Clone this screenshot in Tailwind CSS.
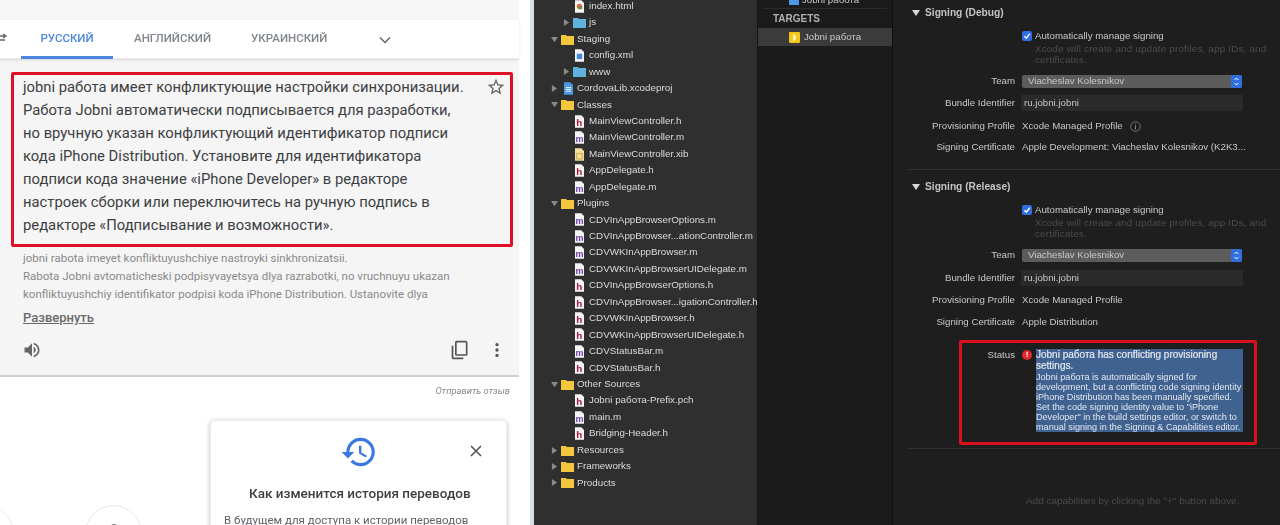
<!DOCTYPE html>
<html lang="ru">
<head>
    <meta charset="UTF-8">
    <title>Jobni работа</title>
    <script src="https://cdn.jsdelivr.net/npm/@tailwindcss/browser@4"></script>
</head>
<body class="bg-white">
    <svg class="hidden">
        <symbol id="fh" viewBox="0 0 10 14"><path d="M0 0h7l3 3v11H0z" fill="#f4f4f4"/><text x="1.5" y="12" font-size="11" font-weight="700" font-family="Liberation Sans" fill="#a3193a">h</text></symbol>
        <symbol id="fm" viewBox="0 0 10 14"><path d="M0 0h7l3 3v11H0z" fill="#f4f4f4"/><text x="0.6" y="12" font-size="10" font-weight="700" font-family="Liberation Sans" fill="#6b3fa8">m</text></symbol>
        <symbol id="fx" viewBox="0 0 10 14"><path d="M0 0h7l3 3v11H0z" fill="#f3dfa0"/><rect x="2" y="6" width="6" height="6" fill="none" stroke="#c9a03c"/></symbol>
        <symbol id="fw" viewBox="0 0 10 14"><path d="M0 0h7l3 3v11H0z" fill="#f4f4f4"/><rect x="2" y="5" width="6" height="6" fill="#3d8fdc"/></symbol>
        <symbol id="fc" viewBox="0 0 10 14"><path d="M0 0h7l3 3v11H0z" fill="#f4f4f4"/><circle cx="5" cy="7" r="3" fill="#d86a3c"/><path d="M5 7h3v3H5z" fill="#4a9a58"/></symbol>
        <symbol id="fp" viewBox="0 0 10 14"><path d="M0 0h7l3 3v11H0z" fill="#4a97e6"/><path d="M2 6h6M2 8h6M2 10h6" stroke="#fff"/></symbol>
        <symbol id="dy" viewBox="0 0 13 11"><path d="M0 1h5l1 1h7v9H0z" fill="#f5c63c"/></symbol>
        <symbol id="db" viewBox="0 0 13 11"><path d="M0 1h5l1 1h7v9H0z" fill="#5eb2dc"/></symbol>
        <symbol id="ar" viewBox="0 0 8 8"><path d="M1 0l6 4-6 4z" fill="#8a8a8a"/></symbol>
        <symbol id="ad" viewBox="0 0 8 8"><path d="M0 1h8L4 7z" fill="#8a8a8a"/></symbol>
        <symbol id="aw" viewBox="0 0 8 8"><path d="M0 1h8L4 7z" fill="#d8d8d8"/></symbol>
        <symbol id="ck" viewBox="0 0 10 10"><rect width="10" height="10" rx="2" fill="#2f6fe0"/><path d="M2.4 5.2l1.9 2 3.4-4.4" fill="none" stroke="#fff" stroke-width="1.4"/></symbol>
        <symbol id="ud" viewBox="0 0 11 13"><rect width="11" height="13" rx="2" fill="#2f6fe0"/><path d="M3.5 5l2-2 2 2M3.5 8l2 2 2-2" fill="none" stroke="#fff"/></symbol>
    </svg>

    <div class="flex h-[525px] w-[1280px] overflow-hidden [font-family:'Liberation_Sans',sans-serif] blur-[0.4px]">
        <!-- translate panel -->
        <div class="w-[530px] shrink-0 flex flex-col [font-family:Roboto,sans-serif]">
            <div class="w-[519px] h-[20px] shrink-0 bg-[#f7f7f7]"></div>
            <div class="w-[519px] h-[39px] shrink-0 flex items-center border-b border-[#ececec] shadow-sm relative">
                <svg class="w-[12px] h-[12px] -ml-[4px] mt-[-2px]" viewBox="0 0 12 12"><path d="M0 4h9M7 2l3 2-3 2M0 8h9" fill="none" stroke="#666" stroke-width="1.4"/></svg>
                <div class="ml-[13px] w-[92px] h-[39px] flex items-center justify-center border-b-[3px] border-[#4d87e0] pt-[3px] text-[11.500px] font-medium text-[#4d87e0]">РУССКИЙ</div>
                <div class="ml-[21px] text-[11.500px] font-medium text-[#80868b]">АНГЛИЙСКИЙ</div>
                <div class="ml-[40px] text-[11.500px] font-medium text-[#80868b]">УКРАИНСКИЙ</div>
                <svg class="ml-[51px] w-[14px] h-[14px] mt-[2px]" viewBox="0 0 14 14"><path d="M2 4.5l5 5 5-5" fill="none" stroke="#666" stroke-width="1.5"/></svg>
            </div>
            <div class="w-[519px] h-[318px] shrink-0 bg-[#f5f5f5] border-b-2 border-[#cfcfcf] pt-[13px] pl-[11px]">
                <div class="w-[502px] h-[175px] border-[3px] border-[#df0f28] pl-[9px] pt-[1px] flex justify-between rounded-[2px]">
                    <p class="text-[14.800px] leading-[23px] text-[#3c4043] whitespace-nowrap">jobni работа имеет конфликтующие настройки синхронизации.<br>Работа Jobni автоматически подписывается для разработки,<br>но вручную указан конфликтующий идентификатор подписи<br>кода iPhone Distribution. Установите для идентификатора<br>подписи кода значение «iPhone Developer» в редакторе<br>настроек сборки или переключитесь на ручную подпись в<br>редакторе «Подписывание и возможности».</p>
                    <svg class="w-[20px] h-[20px] mr-[4px] mt-[1px] shrink-0" viewBox="0 0 24 24" fill="#666"><path d="M22 9.24l-7.19-.62L12 2 9.19 8.63 2 9.24l5.46 4.73L5.82 21 12 17.27 18.18 21l-1.63-7.03L22 9.24zM12 15.4l-3.76 2.27 1-4.28-3.32-2.88 4.38-.38L12 6.1l1.71 4.04 4.38.38-3.32 2.88 1 4.28L12 15.4z"/></svg>
                </div>
                <p class="mt-[2px] ml-[12px] text-[11.500px] leading-[18px] text-[#8a8a8a] whitespace-nowrap">jobni rabota imeyet konfliktuyushchiye nastroyki sinkhronizatsii.<br>Rabota Jobni avtomaticheski podpisyvayetsya dlya razrabotki, no vruchnuyu ukazan<br>konfliktuyushchiy identifikator podpisi koda iPhone Distribution. Ustanovite dlya</p>
                <div class="mt-[6px] ml-[12px] text-[13px] leading-[18px] font-medium text-[#6a6a6a] underline">Развернуть</div>
                <div class="mt-[13px] ml-[12px] w-[484px] flex items-center">
                    <svg class="w-[20px] h-[20px] -ml-[1px]" viewBox="0 0 24 24" fill="#666"><path d="M3 9v6h4l5 5V4L7 9H3zm13.5 3c0-1.77-1.02-3.29-2.5-4.03v8.05c1.48-.73 2.5-2.25 2.5-4.02zM14 3.23v2.06c2.89.86 5 3.54 5 6.71s-2.11 5.85-5 6.71v2.06c4.01-.91 7-4.49 7-8.77s-2.99-7.86-7-8.77z"/></svg>
                    <svg class="w-[20px] h-[20px] ml-auto -scale-y-100" viewBox="0 0 24 24" fill="#555"><path d="M16 1H4c-1.1 0-2 .9-2 2v14h2V3h12V1zm3 4H8c-1.1 0-2 .9-2 2v14c0 1.1.9 2 2 2h11c1.1 0 2-.9 2-2V7c0-1.1-.9-2-2-2zm0 16H8V7h11v14z"/></svg>
                    <svg class="w-[20px] h-[20px] ml-[17px]" viewBox="0 0 24 24" fill="#555"><circle cx="12" cy="5.5" r="2"/><circle cx="12" cy="12" r="2"/><circle cx="12" cy="18.500" r="2"/></svg>
                </div>
            </div>
            <div class="w-[519px] shrink-0 pt-[8px] pr-[9px] text-right text-[9.400px] leading-[12px] italic text-[#8a8a8a]">Отправить отзыв</div>
            <div class="flex w-[519px]">
                <div class="w-[57px] h-[57px] shrink-0 rounded-full border border-[#e6e6e6] -ml-[43px] mt-[108px]"></div>
                <div class="w-[57px] h-[57px] shrink-0 rounded-full border border-[#e6e6e6] ml-[71px] mt-[108px] flex justify-center pt-[18px]"><span class="w-[6px] h-[6px] rounded-full bg-[#777]"></span></div>
                <div class="w-[297px] h-[140px] shrink-0 ml-[68px] mt-[23px] rounded-[5px] bg-white border border-[#eee] shadow-[0_1px_5px_rgba(0,0,0,0.25)] pt-[12px] relative">
                    <svg class="w-[38px] h-[38px] ml-[129px]" viewBox="0 0 24 24" fill="#3b78e0"><path d="M13 3c-4.97 0-9 4.03-9 9H1l3.89 3.89.07.14L9 12H6c0-3.87 3.13-7 7-7s7 3.13 7 7-3.13 7-7 7c-1.93 0-3.68-.79-4.94-2.06l-1.42 1.42C8.27 19.99 10.51 21 13 21c4.97 0 9-4.03 9-9s-4.03-9-9-9zm-1 5v5l4.28 2.54.72-1.21-3.5-2.08V8H12z"/></svg>
                    <svg class="absolute top-[22px] left-[257px] w-[16px] h-[16px]" viewBox="0 0 16 16"><path d="M3 3l10 10M13 3L3 13" stroke="#555" stroke-width="1.6"/></svg>
                    <div class="mt-[12px] ml-[38px] text-[13.500px] leading-[20px] font-medium text-[#3c4043] whitespace-nowrap">Как изменится история переводов</div>
                    <div class="mt-[8px] ml-[13px] text-[11.500px] leading-[18px] text-[#5f6368] whitespace-nowrap">В будущем для доступа к истории переводов</div>
                </div>
            </div>
        </div>
        <div class="w-[4px] shrink-0 bg-[#cfe2ee]"></div>

        <!-- project navigator -->
        <div class="w-[224px] shrink-0 bg-[#2f2f2f] text-[9.800px] text-[#dcdcdc] border-r border-[#141414]">
            <div class="-mt-[2px] [&>div]:h-[16.45px] [&>div]:flex [&>div]:items-center [&>div]:whitespace-nowrap [&_svg]:shrink-0">
                <div class="pl-[41px]"><svg class="w-[9px] h-[13px] mr-[5px]"><use href="#fc"/></svg>index.html</div>
                <div class="pl-[29px]"><svg class="w-[7px] h-[7px] mr-[3px]"><use href="#ar"/></svg><svg class="w-[13px] h-[11px] mr-[3px]"><use href="#db"/></svg>js</div>
                <div class="pl-[17px]"><svg class="w-[7px] h-[7px] mr-[3px]"><use href="#ad"/></svg><svg class="w-[13px] h-[11px] mr-[3px]"><use href="#dy"/></svg>Staging</div>
                <div class="pl-[41px]"><svg class="w-[9px] h-[13px] mr-[5px]"><use href="#fw"/></svg>config.xml</div>
                <div class="pl-[29px]"><svg class="w-[7px] h-[7px] mr-[3px]"><use href="#ar"/></svg><svg class="w-[13px] h-[11px] mr-[3px]"><use href="#db"/></svg>www</div>
                <div class="pl-[17px]"><svg class="w-[7px] h-[7px] mr-[6px]"><use href="#ar"/></svg><svg class="w-[9px] h-[13px] mr-[4px]"><use href="#fp"/></svg>CordovaLib.xcodeproj</div>
                <div class="pl-[17px]"><svg class="w-[7px] h-[7px] mr-[3px]"><use href="#ad"/></svg><svg class="w-[13px] h-[11px] mr-[3px]"><use href="#dy"/></svg>Classes</div>
                <div class="pl-[41px]"><svg class="w-[9px] h-[13px] mr-[5px]"><use href="#fh"/></svg>MainViewController.h</div>
                <div class="pl-[41px]"><svg class="w-[9px] h-[13px] mr-[5px]"><use href="#fm"/></svg>MainViewController.m</div>
                <div class="pl-[41px]"><svg class="w-[9px] h-[13px] mr-[5px]"><use href="#fx"/></svg>MainViewController.xib</div>
                <div class="pl-[41px]"><svg class="w-[9px] h-[13px] mr-[5px]"><use href="#fh"/></svg>AppDelegate.h</div>
                <div class="pl-[41px]"><svg class="w-[9px] h-[13px] mr-[5px]"><use href="#fm"/></svg>AppDelegate.m</div>
                <div class="pl-[17px]"><svg class="w-[7px] h-[7px] mr-[3px]"><use href="#ad"/></svg><svg class="w-[13px] h-[11px] mr-[3px]"><use href="#dy"/></svg>Plugins</div>
                <div class="pl-[41px]"><svg class="w-[9px] h-[13px] mr-[5px]"><use href="#fm"/></svg>CDVInAppBrowserOptions.m</div>
                <div class="pl-[41px]"><svg class="w-[9px] h-[13px] mr-[5px]"><use href="#fm"/></svg>CDVInAppBrowser...ationController.m</div>
                <div class="pl-[41px]"><svg class="w-[9px] h-[13px] mr-[5px]"><use href="#fm"/></svg>CDVWKInAppBrowser.m</div>
                <div class="pl-[41px]"><svg class="w-[9px] h-[13px] mr-[5px]"><use href="#fm"/></svg>CDVWKInAppBrowserUIDelegate.m</div>
                <div class="pl-[41px]"><svg class="w-[9px] h-[13px] mr-[5px]"><use href="#fh"/></svg>CDVInAppBrowserOptions.h</div>
                <div class="pl-[41px]"><svg class="w-[9px] h-[13px] mr-[5px]"><use href="#fh"/></svg>CDVInAppBrowser...igationController.h</div>
                <div class="pl-[41px]"><svg class="w-[9px] h-[13px] mr-[5px]"><use href="#fh"/></svg>CDVWKInAppBrowser.h</div>
                <div class="pl-[41px]"><svg class="w-[9px] h-[13px] mr-[5px]"><use href="#fh"/></svg>CDVWKInAppBrowserUIDelegate.h</div>
                <div class="pl-[41px]"><svg class="w-[9px] h-[13px] mr-[5px]"><use href="#fm"/></svg>CDVStatusBar.m</div>
                <div class="pl-[41px]"><svg class="w-[9px] h-[13px] mr-[5px]"><use href="#fh"/></svg>CDVStatusBar.h</div>
                <div class="pl-[17px]"><svg class="w-[7px] h-[7px] mr-[3px]"><use href="#ad"/></svg><svg class="w-[13px] h-[11px] mr-[3px]"><use href="#dy"/></svg>Other Sources</div>
                <div class="pl-[41px]"><svg class="w-[9px] h-[13px] mr-[5px]"><use href="#fh"/></svg>Jobni работа-Prefix.pch</div>
                <div class="pl-[41px]"><svg class="w-[9px] h-[13px] mr-[5px]"><use href="#fm"/></svg>main.m</div>
                <div class="pl-[41px]"><svg class="w-[9px] h-[13px] mr-[5px]"><use href="#fh"/></svg>Bridging-Header.h</div>
                <div class="pl-[17px]"><svg class="w-[7px] h-[7px] mr-[3px]"><use href="#ar"/></svg><svg class="w-[13px] h-[11px] mr-[3px]"><use href="#dy"/></svg>Resources</div>
                <div class="pl-[17px]"><svg class="w-[7px] h-[7px] mr-[3px]"><use href="#ar"/></svg><svg class="w-[13px] h-[11px] mr-[3px]"><use href="#dy"/></svg>Frameworks</div>
                <div class="pl-[17px]"><svg class="w-[7px] h-[7px] mr-[3px]"><use href="#ar"/></svg><svg class="w-[13px] h-[11px] mr-[3px]"><use href="#dy"/></svg>Products</div>
            </div>
        </div>

        <!-- targets column -->
        <div class="w-[135px] shrink-0 bg-[#1b1b1b] border-r border-[#0e0e0e] text-[9.700px]">
            <div class="h-[9px] mx-[5px] border-b border-[#2c2c2c] overflow-hidden pl-[26px] flex items-start text-[#c8c8c8]">
                <span class="w-[10px] h-[5px] mr-[3px] bg-[#4a97e6] shrink-0"></span><span class="-mt-[5px] leading-[10px]">Jobni работа</span>
            </div>
            <div class="h-[19px] pl-[15px] flex items-center font-bold text-[10px] text-[#b0b0b0]">TARGETS</div>
            <div class="h-[18px] bg-[#3b3b3b] pl-[31px] flex items-center text-[#c8c8c8]">
                <span class="w-[11px] h-[11px] mr-[4px] rounded-[1px] bg-[#f5c518] flex items-center justify-center"><span class="w-[3px] h-[7px] rounded-r-full bg-[#fff3b0]"></span></span>Jobni работа
            </div>
        </div>

        <!-- signing settings -->
        <div class="flex-1 bg-[#1e1e1e] text-[9.700px] text-[#c8c8c8] relative">
            <div class="h-[170px] ml-[14px] border-b border-[#303030]">
                <div class="h-[25px] flex items-center pl-[5px] font-bold text-[10.200px] text-[#c4c4c4]"><svg class="w-[8px] h-[8px] mr-[5px]"><use href="#aw"/></svg>Signing (Debug)</div>
                <div class="mt-[4px] h-[14px] pl-[115px] flex items-center"><svg class="w-[10px] h-[10px] mr-[3px]"><use href="#ck"/></svg>Automatically manage signing</div>
                <p class="pl-[128px] text-[9.800px] tracking-[0.2px] leading-[11px] text-[#4c4c4c]">Xcode will create and update profiles, app IDs, and<br>certificates.</p>
                <div class="mt-[9px] h-[14px] flex items-center"><span class="w-[108px] text-right mr-[7px]">Team</span><span class="w-[220px] h-[13px] rounded-[2px] bg-[#5c5c5c] pl-[6px] flex items-center justify-between">Viacheslav Kolesnikov<svg class="w-[11px] h-[13px]"><use href="#ud"/></svg></span></div>
                <div class="mt-[7px] h-[16px] flex items-center"><span class="w-[108px] text-right mr-[6px]">Bundle Identifier</span><span class="w-[222px] h-[16px] bg-[#2a2a2a] pl-[3px] flex items-center">ru.jobni.jobni</span></div>
                <div class="mt-[8px] h-[14px] flex items-center"><span class="w-[108px] text-right mr-[7px]">Provisioning Profile</span>Xcode Managed Profile<svg class="ml-[7px] w-[11px] h-[11px]" viewBox="0 0 11 11"><circle cx="5.5" cy="5.500" r="4.800" fill="none" stroke="#888" stroke-width="0.8"/><path d="M5.500 4.500v4M5.500 2.500v1" stroke="#888"/></svg></div>
                <div class="mt-[7px] h-[14px] flex items-center whitespace-nowrap"><span class="w-[108px] text-right mr-[7px]">Signing Certificate</span>Apple Development: Viacheslav Kolesnikov (K2K3...</div>
            </div>
            <div class="ml-[14px] h-[279px] border-b border-[#303030]">
                <div class="h-[33px] flex items-center pl-[5px] font-bold text-[10.200px] text-[#c4c4c4]"><svg class="w-[8px] h-[8px] mr-[5px]"><use href="#aw"/></svg>Signing (Release)</div>
                <div class="h-[14px] pl-[115px] flex items-center"><svg class="w-[10px] h-[10px] mr-[3px]"><use href="#ck"/></svg>Automatically manage signing</div>
                <p class="pl-[128px] text-[9.800px] tracking-[0.2px] leading-[11px] text-[#4c4c4c]">Xcode will create and update profiles, app IDs, and<br>certificates.</p>
                <div class="mt-[9px] h-[14px] flex items-center"><span class="w-[108px] text-right mr-[7px]">Team</span><span class="w-[220px] h-[13px] rounded-[2px] bg-[#5c5c5c] pl-[6px] flex items-center justify-between">Viacheslav Kolesnikov<svg class="w-[11px] h-[13px]"><use href="#ud"/></svg></span></div>
                <div class="mt-[8px] h-[16px] flex items-center"><span class="w-[108px] text-right mr-[6px]">Bundle Identifier</span><span class="w-[222px] h-[16px] bg-[#2a2a2a] pl-[3px] flex items-center">ru.jobni.jobni</span></div>
                <div class="mt-[7px] h-[14px] flex items-center"><span class="w-[108px] text-right mr-[7px]">Provisioning Profile</span>Xcode Managed Profile</div>
                <div class="mt-[8px] h-[14px] flex items-center"><span class="w-[108px] text-right mr-[7px]">Signing Certificate</span>Apple Distribution</div>
                <div class="mt-[20px] flex">
                    <span class="w-[108px] text-right mr-[7px] leading-[11px]">Status</span>
                    <span class="w-[10px] h-[10px] mt-[1px] mr-[4px] shrink-0 rounded-full bg-[#e0282e] text-white text-[8px] leading-[10px] text-center font-bold">!</span>
                    <div class="w-[207px] bg-[#3f6290] text-[#e4e8ee] whitespace-nowrap">
                        <p class="text-[10px] leading-[11px] [-webkit-text-stroke:0.2px]">Jobni работа has conflicting provisioning<br>settings.</p>
                        <p class="mt-[1px] text-[9.100px] leading-[10px]">Jobni работа is automatically signed for<br>development, but a conflicting code signing identity<br>iPhone Distribution has been manually specified.<br>Set the code signing identity value to "iPhone<br>Developer" in the build settings editor, or switch to<br>manual signing in the Signing &amp; Capabilities editor.</p>
                    </div>
                </div>
            </div>
            <div class="mt-[46px] pl-[133px] text-[9.950px] leading-[12px] text-[#4a4a4a] whitespace-nowrap">Add capabilities by clicking the "+" button above.</div>
            <div class="absolute left-[66px] top-[340px] w-[298px] h-[105px] border-[3px] border-[#dc0f1e] rounded-[2px]"></div>
        </div>
    </div>
</body>
</html>
